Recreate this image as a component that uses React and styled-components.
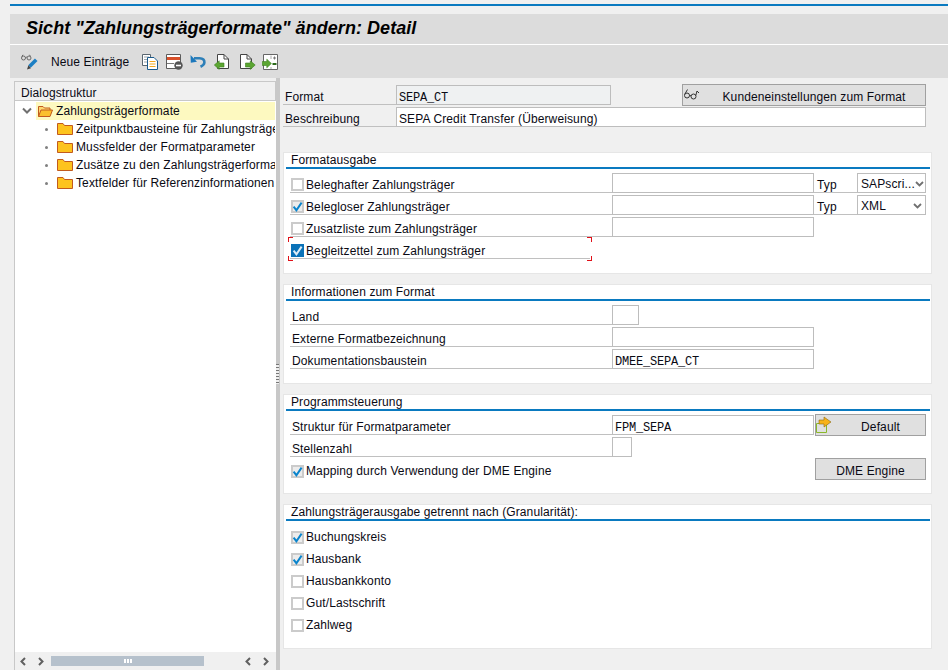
import React from "react";
import styled, { createGlobalStyle } from "styled-components";

const GlobalStyle = createGlobalStyle`
  html, body {
    margin: 0;
    padding: 0;
    height: 100%;
    background: #f0f0f0;
    overflow: hidden;
  }
  #root {
    height: 100%;
  }
  * {
    box-sizing: border-box;
  }
`;

const Page = styled.div`
  width: 948px;
  height: 670px;
  display: flex;
  flex-direction: column;
  padding-top: 4px;
  font-family: "Liberation Sans", Arial, sans-serif;
  font-size: 12px;
  letter-spacing: 0.12px;
  color: #0a0a14;
`;
const TopLine = styled.div`
  height: 2px;
  margin-left: 10px;
  background: #0a7ac0;
`;
const TitleBar = styled.div`
  height: 30px;
  margin: 8px 0 0 10px;
  padding: 0 0 2px 16px;
  display: flex;
  align-items: center;
  background: #dcdcdc;
  font-size: 18px;
  font-weight: bold;
  font-style: italic;
  letter-spacing: 0.05px;
  color: #000;
`;
const Toolbar = styled.div`
  height: 34px;
  margin-left: 10px;
  border-top: 1px solid #fff;
  background: #dcdcdc;
  display: flex;
  align-items: center;
  padding-left: 11px;
`;
const ToolIcon = styled.svg`
  display: block;
  flex: none;
  margin-left: ${(p) => p.$gap || 0}px;
`;
const ToolText = styled.span`
  margin-left: 13px;
  width: 91px;
`;

const Main = styled.div`
  flex: 1;
  min-height: 0;
  display: flex;
`;
const LeftPane = styled.div`
  width: 262px;
  margin-left: 14px;
  padding-top: 3px;
  display: flex;
  flex-direction: column;
`;
const TreeHeader = styled.div`
  height: 20px;
  padding: 3px 0 0 6px;
  display: flex;
  align-items: center;
  background: #f0f0f0;
  border: 1px solid #c8c8c8;
`;
const TreeBody = styled.div`
  flex: 1;
  min-height: 0;
  background: #fff;
  border-left: 1px solid #c8c8c8;
  padding-top: 1px;
  overflow: hidden;
`;
const TreeRow = styled.div`
  height: 18px;
  display: flex;
  align-items: center;
  white-space: nowrap;
  overflow: hidden;
  width: 260px;
`;
const Expander = styled.svg`
  flex: none;
  margin: 0 3px 0 6px;
`;
const RootCell = styled.div`
  flex: 1;
  height: 18px;
  display: flex;
  align-items: center;
  background: #fdf9c0;
  padding-left: 1px;
`;
const Bullet = styled.span`
  flex: none;
  width: 3px;
  height: 3px;
  margin: 0 9px 0 30px;
  background: #808080;
  border-radius: 50%;
`;
const FolderIcon = styled.svg`
  flex: none;
  margin-right: ${(p) => p.$gap}px;
`;
const ScrollBar = styled.div`
  height: 18px;
  background: #f0f0f0;
  border-left: 1px solid #c8c8c8;
  display: flex;
  align-items: center;
  padding-left: 5px;
`;
const ScrollArrow = styled.svg`
  flex: none;
  margin-left: ${(p) => p.$gap || 0}px;
`;
const ScrollThumb = styled.div`
  width: 153px;
  height: 10px;
  margin-left: 7px;
  background: #b6c1cc;
  display: flex;
  align-items: center;
  justify-content: center;
  gap: 1px;
`;
const Grip = styled.span`
  width: 2px;
  height: 4px;
  background: #fff;
`;

const Splitter = styled.div`
  width: 4px;
  flex: none;
  background: #c8c8c8;
  position: relative;
`;
const SplitGrip = styled.div`
  position: absolute;
  left: 0;
  top: 286px;
  width: 3px;
  height: 20px;
  background: repeating-linear-gradient(#777 0 1px, #eee 1px 3px);
`;

const RightPane = styled.div`
  flex: 1;
  min-width: 0;
  padding: 6px 0 0 3px;
  display: flex;
  flex-direction: column;
`;
const HeadRow = styled.div`
  display: flex;
  align-items: flex-start;
  height: ${(p) => p.$h}px;
`;
const HeadLabel = styled.div`
  width: 113px;
  height: ${(p) => p.$h}px;
  padding: ${(p) => p.$pad}px 0 0 2px;
  display: flex;
  align-items: center;
  border-bottom: 1px solid #c0c0c0;
`;
const Field = styled.div`
  flex: none;
  width: ${(p) => p.$w}px;
  height: 20px;
  margin-top: ${(p) => p.$top || 0}px;
  padding: ${(p) => (p.$mono ? 6 : 4)}px 0 0 2px;
  display: flex;
  align-items: center;
  background: ${(p) => (p.$readOnly ? "#eff1f2" : "#fff")};
  border: 1px solid #bdbdbd;
  font-family: ${(p) => (p.$mono ? '"Liberation Mono", monospace' : "inherit")};
  letter-spacing: ${(p) => (p.$mono ? "-0.2px" : "inherit")};
`;
const Button = styled.div`
  flex: none;
  width: ${(p) => p.$w}px;
  height: 22px;
  margin-left: ${(p) => p.$left || 0}px;
  margin-top: ${(p) => (p.$up ? -1 : 0)}px;
  padding-top: 3px;
  display: flex;
  align-items: center;
  position: relative;
  background: #e0e0e0;
  border: 1px solid #a0a0a0;
`;
const ButtonLabel = styled.span`
  flex: 1;
  text-align: center;
  padding-left: ${(p) => p.$pad || 0}px;
`;
const ButtonIcon = styled.svg`
  position: absolute;
  left: 0;
  top: 1px;
`;

const Group = styled.section`
  width: 649px;
  height: ${(p) => p.$h}px;
  margin-top: ${(p) => p.$top ?? 10}px;
  background: #fff;
  border: 1px solid #e6e6e6;
  padding: 0 1px 0 2px;
`;
const GroupTitle = styled.div`
  height: 14px;
  padding: 0 0 1px 5px;
  display: flex;
  align-items: center;
`;
const GroupRule = styled.div`
  height: 2px;
  background: #0a7ac0;
  margin-bottom: 4px;
`;
const Rows = styled.div`
  display: flex;
  flex-direction: column;
  gap: 2px;
  padding-left: 4px;
`;
const Row = styled.div`
  height: 20px;
  display: flex;
  position: relative;
`;
const RowLabel = styled.div`
  flex: none;
  width: ${(p) => p.$w || 322}px;
  height: 20px;
  padding: 4px 0 0 ${(p) => p.$pad ?? 2}px;
  display: flex;
  align-items: center;
  border-bottom: ${(p) => (p.$plain ? "0" : "1px solid #c0c0c0")};
`;
const Check = styled.span`
  flex: none;
  width: 13px;
  height: 13px;
  margin: 0 2px 0 1px;
  position: relative;
  display: block;
  background: ${(p) => (p.$focus ? "#0a72b8" : p.$on ? "#ececec" : "#fff")};
  border: 2px solid ${(p) => (p.$focus ? "#0a72b8" : "#cbcbcb")};
`;
const CheckMark = styled.svg`
  position: absolute;
  left: -2px;
  top: -2px;
`;
const TypLabel = styled.div`
  flex: none;
  width: 43px;
  height: 20px;
  padding: 4px 0 0 3px;
  display: flex;
  align-items: center;
  border-bottom: 1px solid #c0c0c0;
`;
const Select = styled.div`
  flex: none;
  width: 69px;
  height: 20px;
  padding: 1px 3px 0 3px;
  display: flex;
  align-items: center;
  justify-content: space-between;
  white-space: nowrap;
  background: #fff;
  border: 1px solid #bdbdbd;
`;
const SelectArrow = styled.svg`
  flex: none;
`;
const Corner = styled.span`
  position: absolute;
  width: 5px;
  height: 5px;
  border-color: #e01018;
  border-style: solid;
  border-width: ${(p) =>
    `${p.$b ? 0 : 1}px ${p.$r ? 1 : 0}px ${p.$b ? 1 : 0}px ${p.$r ? 0 : 1}px`};
  ${(p) => (p.$r ? "left: 297px;" : "left: -2px;")}
  ${(p) => (p.$b ? "top: 17px;" : "top: -2px;")}
`;

const CheckBox = ({ on, focus }) => (
  <Check $on={on} $focus={focus}>
    {on && (
      <CheckMark width="13" height="13" viewBox="0 0 13 13">
        <path
          d="M2.6 6.6 5.4 10.2 10.6 2.6"
          fill="none"
          stroke={focus ? "#dcecf6" : "#0a84cc"}
          strokeWidth="2"
        />
      </CheckMark>
    )}
  </Check>
);

const Chevron = () => (
  <SelectArrow width="9" height="6" viewBox="0 0 9 6">
    <path d="M1 1 4.5 4.5 8 1" fill="none" stroke="#707070" strokeWidth="1.8" />
  </SelectArrow>
);

const Folder = ({ gap, open }) => (
  <FolderIcon width="16" height="14" viewBox="0 0 16 14" $gap={gap}>
    {open ? (
      <>
        <path d="M1.5 12.5V2.5H6L7.5 4H13V6" fill="#fdd870" stroke="#c25a1e" />
        <path d="M1.5 12.5 4 6H15.5L13 12.5Z" fill="#fbc02d" stroke="#c25a1e" />
      </>
    ) : (
      <path d="M.5 12.5V1.5H6L7.5 3.5H15.5V12.5Z" fill="#fdc31e" stroke="#c25a1e" />
    )}
  </FolderIcon>
);

const Arrow = ({ dir, gap }) => (
  <ScrollArrow width="6" height="9" viewBox="0 0 6 9" $gap={gap}>
    <path
      d={dir === "l" ? "M5 1 1.5 4.5 5 8" : "M1 1 4.5 4.5 1 8"}
      fill="none"
      stroke="#606060"
      strokeWidth="2"
    />
  </ScrollArrow>
);

const Glasses = ({ x = 0, y = 0, color = "#707070" }) => (
  <g transform={`translate(${x} ${y})`} fill="none" stroke={color} strokeWidth="1">
    <circle cx="2.5" cy="4" r="2" />
    <circle cx="8" cy="4" r="2" />
    <path d="M4.5 3.5Q5.2 2.6 6 3.5M.8 2.5 2 .8M9.5 2.5 8.5.8" />
  </g>
);

const TreeNode = ({ children }) => (
  <TreeRow>
    <Bullet />
    <Folder gap={3} />
    {children}
  </TreeRow>
);

const App = () => (
  <Page>
    <GlobalStyle />
    <TopLine />
    <TitleBar>Sicht "Zahlungsträgerformate" ändern: Detail</TitleBar>
    <Toolbar>
      <ToolIcon width="17" height="16" viewBox="0 0 17 16">
        <Glasses x={0} y={0} color="#6a6a6a" />
        <path d="M15.2 5.8 8.5 12.5" stroke="#1c7fc4" strokeWidth="3.6" />
        <path d="M7.4 11.2 6 15.5 10 14.2Z" fill="#444" />
      </ToolIcon>
      <ToolText>Neue Einträge</ToolText>
      <ToolIcon width="16" height="16" viewBox="0 0 16 16">
        <path d="M.5 .5H8.5V11.5H.5Z" fill="#fff" stroke="#5a6670" />
        <path d="M2 3H7M2 5.5H5M2 8H5" stroke="#9aa4ac" />
        <path d="M5.5 3.5H12L15.5 7V15.5H5.5Z" fill="#fff" stroke="#1a5a8c" />
        <path d="M7.5 7.5H13.5M7.5 10H13.5M7.5 12.5H13.5" stroke="#f2a91e" strokeWidth="1.2" />
      </ToolIcon>
      <ToolIcon width="17" height="16" viewBox="0 0 17 16" $gap={8}>
        <path d="M.5 .5H14.5V14.5H.5Z" fill="#fff" stroke="#5c5c5c" />
        <path d="M1 3H14V6H1Z" fill="#d8502a" />
        <path d="M1 9.5H8" stroke="#777" />
        <circle cx="12.5" cy="11.5" r="4.2" fill="#555" />
        <path d="M10 11.5H15" stroke="#fff" strokeWidth="1.6" />
      </ToolIcon>
      <ToolIcon width="16" height="16" viewBox="0 0 16 16" $gap={7}>
        <path d="M4 4.2H9.5Q14.6 4.5 14.4 8.5 14.2 11.2 10.5 12.8" fill="none" stroke="#2d7fb8" strokeWidth="2.6" />
        <path d="M.5 1 .8 8.8 7 7.8Z" fill="#1c78bc" />
      </ToolIcon>
      <ToolIcon width="16" height="16" viewBox="0 0 16 16" $gap={8}>
        <path d="M3.5 .5H10L14.5 5V14.5H3.5Z" fill="#fff" stroke="#444" />
        <path d="M10 .5V5H14.5" fill="none" stroke="#444" />
        <path d="M.3 11 5.2 6.8V9H10V13H5.2V15.4Z" fill="#5ca632" stroke="#3c7f20" strokeWidth=".6" />
      </ToolIcon>
      <ToolIcon width="16" height="16" viewBox="0 0 16 16" $gap={10}>
        <path d="M.5 .5H7L11.5 5V14.5H.5Z" fill="#fff" stroke="#444" />
        <path d="M7 .5V5H11.5" fill="none" stroke="#444" />
        <path d="M15.2 11 10.3 6.8V9H5.5V13H10.3V15.4Z" fill="#5ca632" stroke="#3c7f20" strokeWidth=".6" />
      </ToolIcon>
      <ToolIcon width="16" height="16" viewBox="0 0 16 16" $gap={6}>
        <path d="M1.5 .5H15.5V15.5H1.5Z" fill="#fff" stroke="#666" />
        <path d="M9 1.5V5M9 13V15" stroke="#aaa" />
        <path d="M11 4H14M12.5 2.5V5.5" stroke="#777" />
        <path d="M10.5 10H14.5" stroke="#2c6a1c" strokeWidth="2" />
        <path d="M9.4 9.5 4.8 5.2V7.5H.3V11.5H4.8V13.8Z" fill="#5ca632" stroke="#3c7f20" strokeWidth=".6" />
      </ToolIcon>
    </Toolbar>
    <Main>
      <LeftPane>
        <TreeHeader>Dialogstruktur</TreeHeader>
        <TreeBody>
          <TreeRow>
            <Expander width="12" height="8" viewBox="0 0 12 8">
              <path d="M2 1.5 6 5.5 10 1.5" fill="none" stroke="#707070" strokeWidth="2" />
            </Expander>
            <RootCell>
              <Folder gap={3} open />
              Zahlungsträgerformate
            </RootCell>
          </TreeRow>
          <TreeNode>Zeitpunktbausteine für Zahlungsträger</TreeNode>
          <TreeNode>Mussfelder der Formatparameter</TreeNode>
          <TreeNode>Zusätze zu den Zahlungsträgerformaten</TreeNode>
          <TreeNode>Textfelder für Referenzinformationen</TreeNode>
        </TreeBody>
        <ScrollBar>
          <Arrow dir="l" />
          <Arrow dir="r" gap={12} />
          <ScrollThumb>
            <Grip />
            <Grip />
            <Grip />
          </ScrollThumb>
          <Arrow dir="l" gap={41} />
          <Arrow dir="r" gap={12} />
        </ScrollBar>
      </LeftPane>
      <Splitter>
        <SplitGrip />
      </Splitter>
      <RightPane>
        <HeadRow $h={23}>
          <HeadLabel $h={21} $pad={6}>Format</HeadLabel>
          <Field $w={215} $top={1} $readOnly $mono>
            SEPA_CT
          </Field>
          <Button $w={244} $left={71}>
            <ButtonIcon width="18" height="16" viewBox="0 0 18 16">
              <g fill="none" stroke="#333">
                <circle cx="4" cy="9.5" r="2.5" />
                <circle cx="10.5" cy="10.5" r="2.5" />
                <path d="M1.6 8.5 4.5 3.5M6.4 9.5 8.2 9.8M12.8 9.5 14 5 16 7" />
              </g>
            </ButtonIcon>
            <ButtonLabel $pad={20}>Kundeneinstellungen zum Format</ButtonLabel>
          </Button>
        </HeadRow>
        <HeadRow $h={45}>
          <HeadLabel $h={20} $pad={4}>Beschreibung</HeadLabel>
          <Field $w={530}>SEPA Credit Transfer (Überweisung)</Field>
        </HeadRow>

        <Group $h={122} $top={0}>
          <GroupTitle>Formatausgabe</GroupTitle>
          <GroupRule />
          <Rows>
            <Row>
              <RowLabel $pad={0}>
                <CheckBox />
                Beleghafter Zahlungsträger
              </RowLabel>
              <Field $w={202} />
              <TypLabel>Typ</TypLabel>
              <Select>
                SAPscri...
                <Chevron />
              </Select>
            </Row>
            <Row>
              <RowLabel $pad={0}>
                <CheckBox on />
                Belegloser Zahlungsträger
              </RowLabel>
              <Field $w={202} />
              <TypLabel>Typ</TypLabel>
              <Select>
                XML
                <Chevron />
              </Select>
            </Row>
            <Row>
              <RowLabel $pad={0}>
                <CheckBox />
                Zusatzliste zum Zahlungsträger
              </RowLabel>
              <Field $w={202} />
            </Row>
            <Row>
              <RowLabel $pad={0} $w={300}>
                <CheckBox on focus />
                Begleitzettel zum Zahlungsträger
              </RowLabel>
              <Corner />
              <Corner $r />
              <Corner $b />
              <Corner $b $r />
            </Row>
          </Rows>
        </Group>

        <Group $h={100}>
          <GroupTitle>Informationen zum Format</GroupTitle>
          <GroupRule />
          <Rows>
            <Row>
              <RowLabel>Land</RowLabel>
              <Field $w={27} />
            </Row>
            <Row>
              <RowLabel>Externe Formatbezeichnung</RowLabel>
              <Field $w={202} />
            </Row>
            <Row>
              <RowLabel>Dokumentationsbaustein</RowLabel>
              <Field $w={202} $mono>
                DMEE_SEPA_CT
              </Field>
            </Row>
          </Rows>
        </Group>

        <Group $h={100}>
          <GroupTitle>Programmsteuerung</GroupTitle>
          <GroupRule />
          <Rows>
            <Row>
              <RowLabel>Struktur für Formatparameter</RowLabel>
              <Field $w={202} $mono>
                FPM_SEPA
              </Field>
              <Button $w={111} $left={1} $up>
                <ButtonIcon width="18" height="18" viewBox="0 0 18 18">
                  <path d="M.5 7.5H10.5V16.5H.5Z" fill="none" stroke="#8ab82a" />
                  <path d="M3 4H8V1L15 6 8 11V8H3Z" fill="#f7b21a" stroke="#8a6a10" strokeWidth=".6" />
                </ButtonIcon>
                <ButtonLabel $pad={20}>Default</ButtonLabel>
              </Button>
            </Row>
            <Row>
              <RowLabel>Stellenzahl</RowLabel>
              <Field $w={20} />
            </Row>
            <Row>
              <RowLabel $pad={0} $plain $w={525}>
                <CheckBox on />
                Mapping durch Verwendung der DME Engine
              </RowLabel>
              <Button $w={111} $up>
                <ButtonLabel>DME Engine</ButtonLabel>
              </Button>
            </Row>
          </Rows>
        </Group>

        <Group $h={145}>
          <GroupTitle>Zahlungsträgerausgabe getrennt nach (Granularität):</GroupTitle>
          <GroupRule />
          <Rows>
            <Row>
              <RowLabel $pad={0} $plain>
                <CheckBox on />
                Buchungskreis
              </RowLabel>
            </Row>
            <Row>
              <RowLabel $pad={0} $plain>
                <CheckBox on />
                Hausbank
              </RowLabel>
            </Row>
            <Row>
              <RowLabel $pad={0} $plain>
                <CheckBox />
                Hausbankkonto
              </RowLabel>
            </Row>
            <Row>
              <RowLabel $pad={0} $plain>
                <CheckBox />
                Gut/Lastschrift
              </RowLabel>
            </Row>
            <Row>
              <RowLabel $pad={0} $plain>
                <CheckBox />
                Zahlweg
              </RowLabel>
            </Row>
          </Rows>
        </Group>
      </RightPane>
    </Main>
  </Page>
);

export default App;
